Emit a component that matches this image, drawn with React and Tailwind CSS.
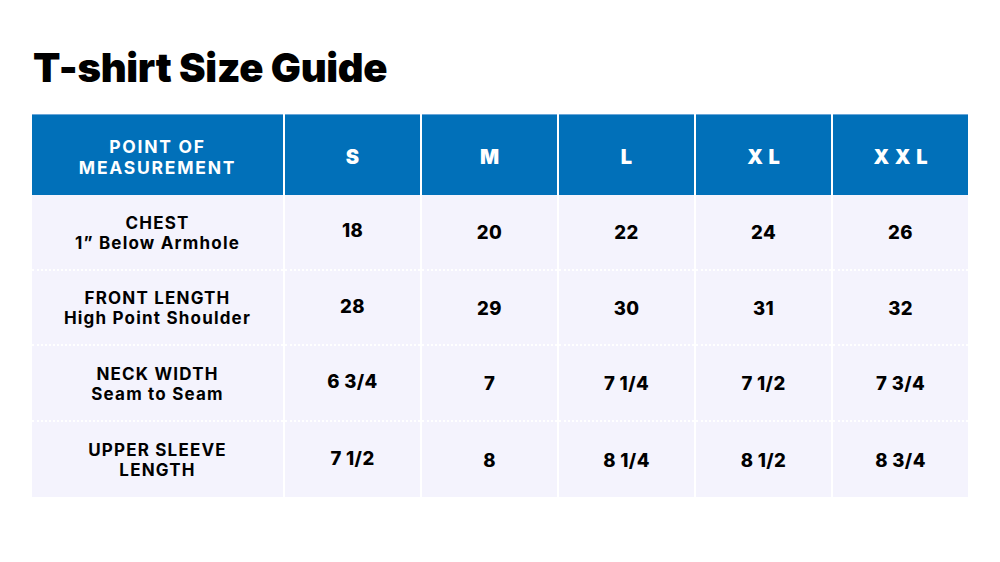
import React from "react";

const sizes = ["S", "M", "L", "XL", "XXL"];

const rows = [
  { title: "CHEST", sub: "1\u201d Below Armhole", values: ["18", "20", "22", "24", "26"] },
  { title: "FRONT LENGTH", sub: "High Point Shoulder", values: ["28", "29", "30", "31", "32"] },
  { title: "NECK WIDTH", sub: "Seam to Seam", values: ["6 3/4", "7", "7 1/4", "7 1/2", "7 3/4"] },
  { title: "UPPER SLEEVE", sub: "LENGTH", values: ["7 1/2", "8", "8 1/4", "8 1/2", "8 3/4"] },
];

function App() {
  return (
    <div className="w-[1000px] h-[562px] bg-white font-['Inter',sans-serif] text-black px-[32px] pt-[44px]">
      <h1 className="text-[40px] leading-[48px] font-black tracking-[-0.008em] ml-[1px]">
        T-shirt Size Guide
      </h1>

      <div className="mt-[22px] w-[936px] grid grid-cols-[251px_repeat(5,1fr)] gap-x-[2px]">
        <div className="h-[81px] bg-[#0170b9] border-t border-[#6aa6d8] flex flex-col items-center justify-center pt-[3px] text-white text-[17.5px] leading-[21px] font-bold tracking-[0.1em]">
          <span>POINT OF</span>
          <span>MEASUREMENT</span>
        </div>
        {sizes.map((s) => (
          <div
            key={s}
            className="h-[81px] bg-[#0170b9] border-t border-[#6aa6d8] flex items-center justify-center pt-[3px] text-white text-[20px] font-black tracking-[0.28em] pl-[0.28em]"
          >
            {s}
          </div>
        ))}

        {rows.map((r, i) => (
          <React.Fragment key={r.title}>
            <div
              className={`h-[75.5px] bg-[#f4f3fd] flex flex-col items-center justify-center text-[17px] leading-[20px] font-bold tracking-[0.07em] pt-[2px] ${
                i < rows.length - 1 ? "border-b-2 border-dotted border-white" : ""
              }`}
            >
              <span>{r.title}</span>
              <span>{r.sub}</span>
            </div>
            {r.values.map((v, j) => (
              <div
                key={j}
                className={`h-[75.5px] bg-[#f4f3fd] flex items-center justify-center text-[18.5px] font-extrabold tracking-[0.02em] ${
                  j === 0 ? "pb-[1px]" : "pt-[3px]"
                } ${i < rows.length - 1 ? "border-b-2 border-dotted border-white" : ""}`}
              >
                {v}
              </div>
            ))}
          </React.Fragment>
        ))}
      </div>
    </div>
  );
}

export default App;
